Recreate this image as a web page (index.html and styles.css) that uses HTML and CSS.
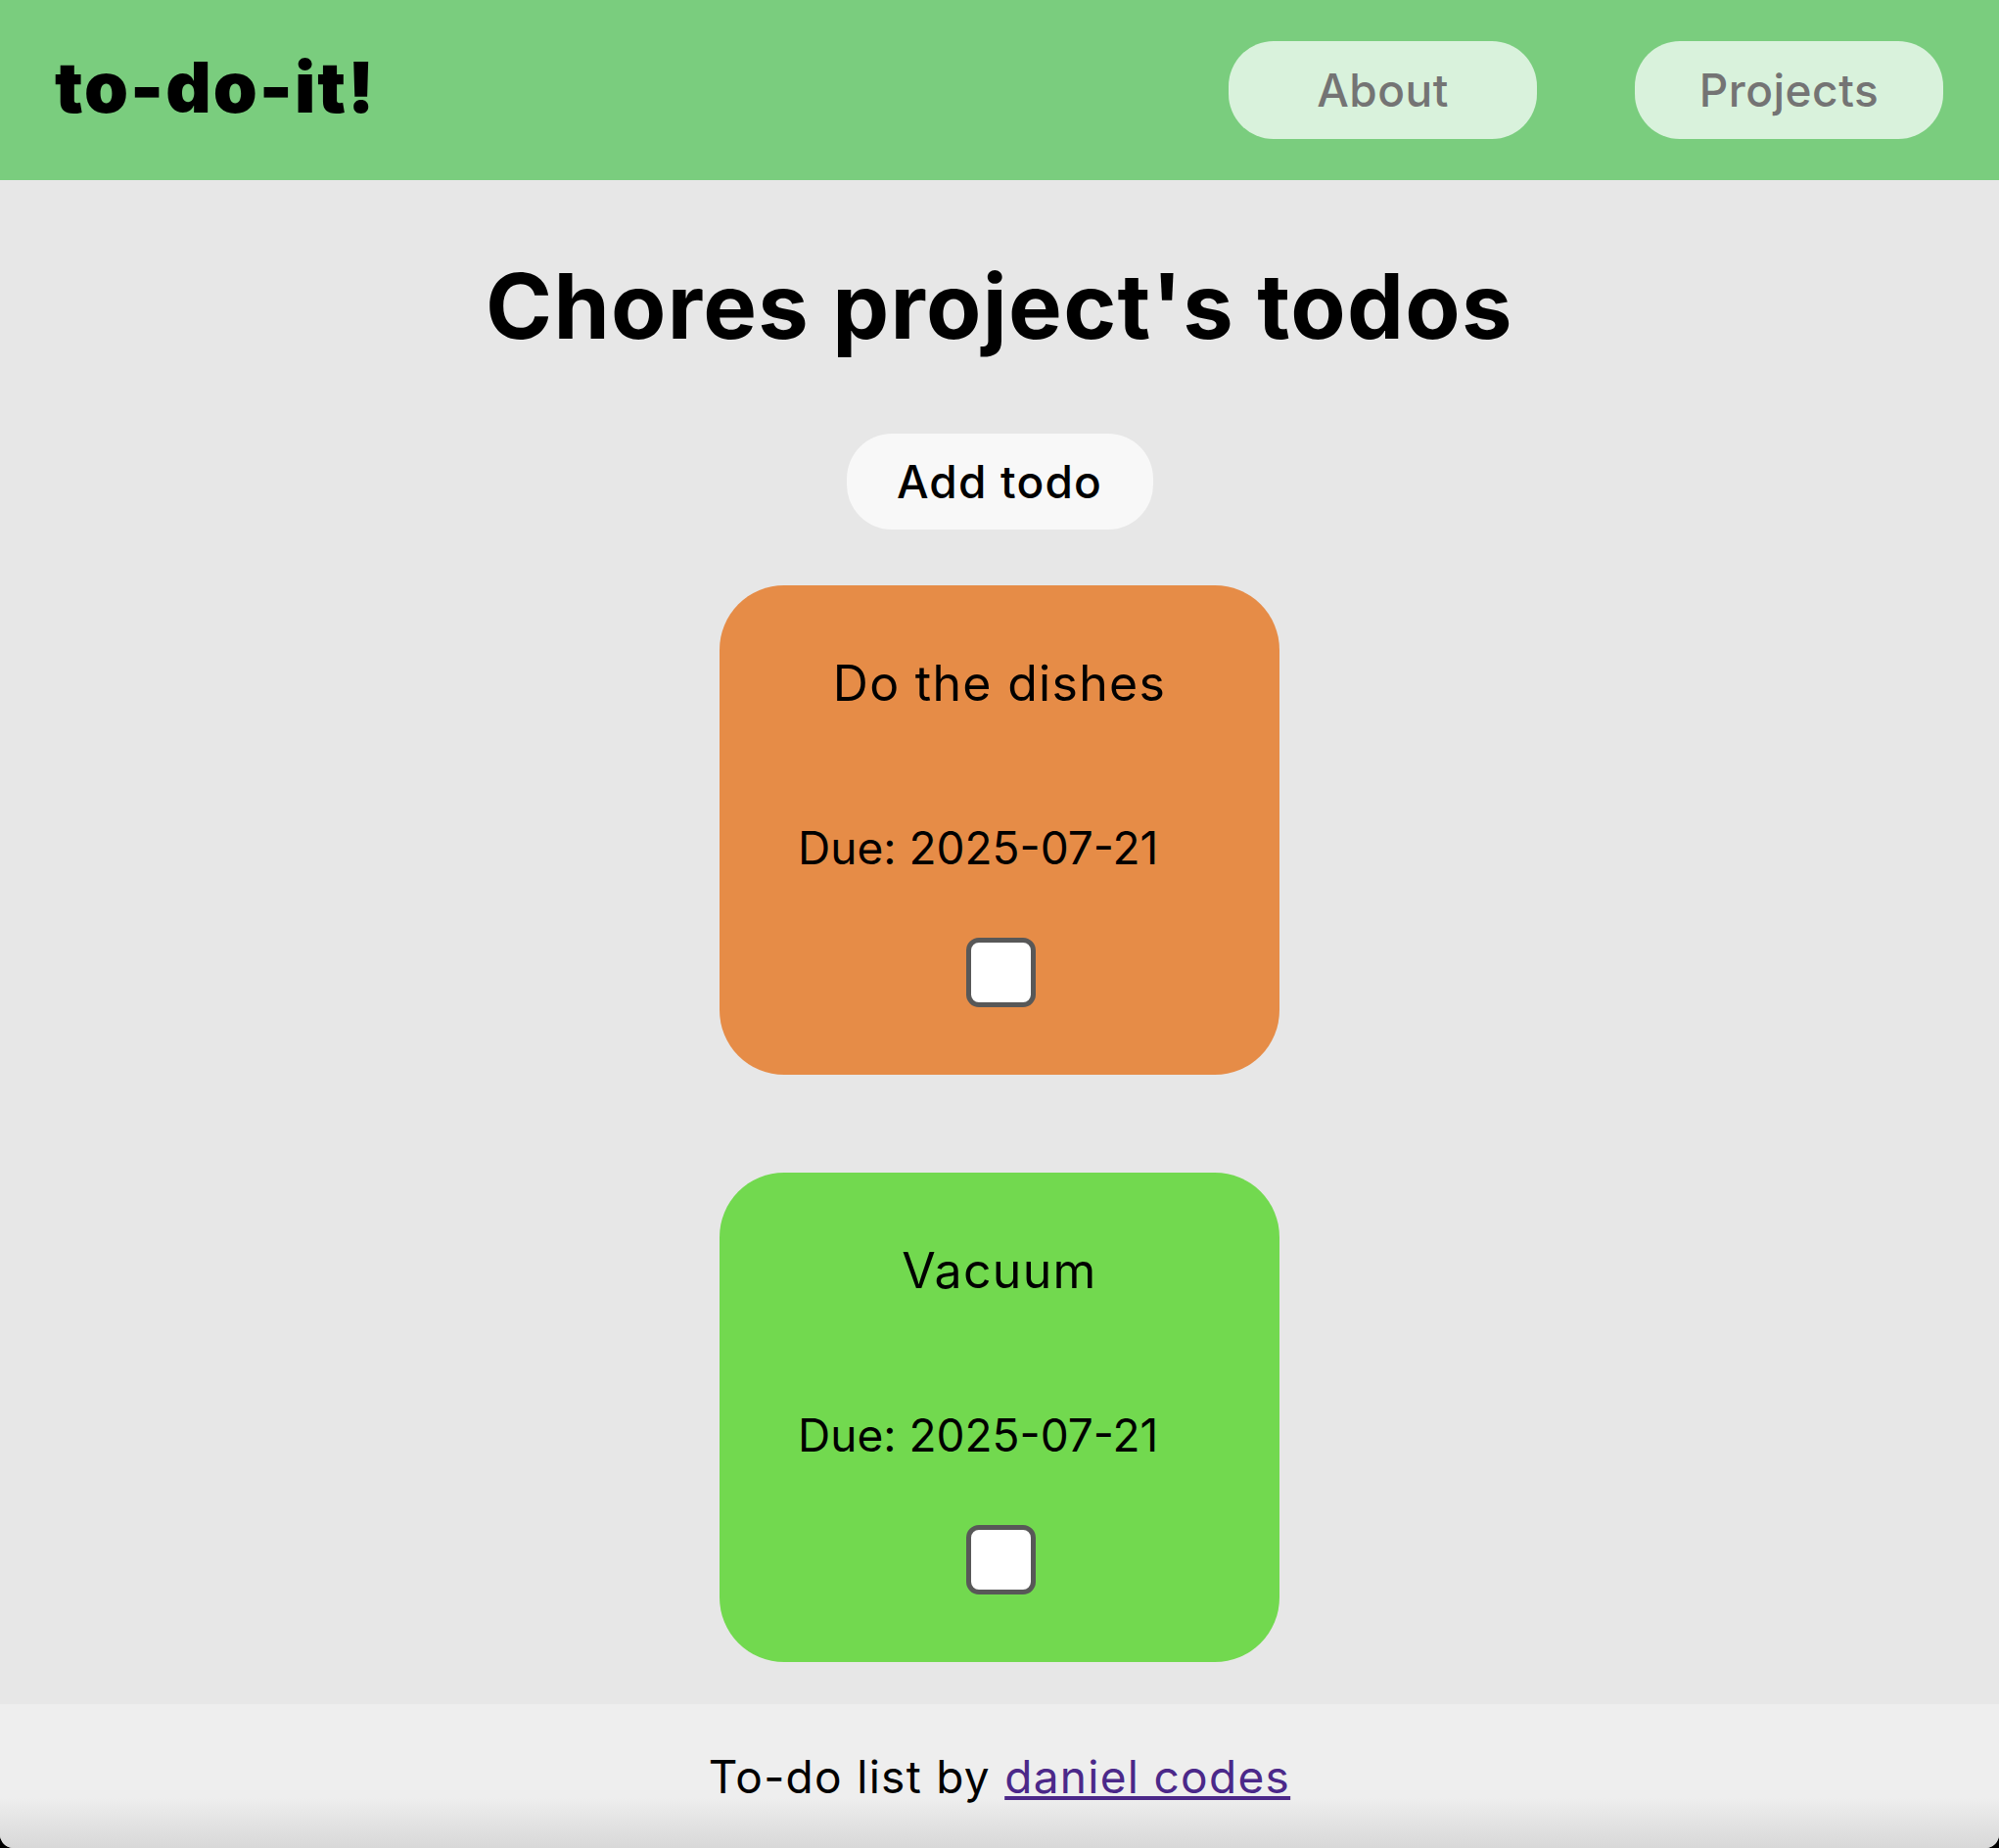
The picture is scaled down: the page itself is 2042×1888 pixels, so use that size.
FILE: index.html
```html
<!DOCTYPE html>
<html lang="en">
<head>
<meta charset="utf-8">
<title>to-do-it!</title>
<link rel="stylesheet" href="styles.css">
</head>
<body>
<div class="page">
  <header class="topbar">
    <div class="logo">to-do-it!</div>
    <nav class="nav">
      <button class="nav-btn">About</button>
      <button class="nav-btn">Projects</button>
    </nav>
  </header>
  <main class="content">
    <h1 class="title">Chores project's todos</h1>
    <button class="add-btn">Add todo</button>
    <div class="todos">
      <div class="todo todo-orange">
        <div class="todo-name">Do the dishes</div>
        <div class="todo-due">Due: 2025-07-21</div>
        <span class="check"></span>
      </div>
      <div class="todo todo-green">
        <div class="todo-name">Vacuum</div>
        <div class="todo-due">Due: 2025-07-21</div>
        <span class="check"></span>
      </div>
    </div>
  </main>
  <footer class="footer">
    <p class="footer-text">To-do list by <a class="footer-link" href="#">daniel codes</a></p>
  </footer>
</div>
</body>
</html>
```
FILE: styles.css
```css
html {
  background: #000;
}
body {
  margin: 0;
  font-family: "Inter", "Noto Sans", sans-serif;
  color: #000;
}
.page {
  min-height: 100vh;
  display: flex;
  flex-direction: column;
  background: #e7e7e7;
  border-bottom-left-radius: 14px;
  border-bottom-right-radius: 14px;
  overflow: hidden;
}
.topbar {
  height: 184px;
  flex-shrink: 0;
  background: #7acd7e;
  display: flex;
  align-items: center;
  justify-content: space-between;
  padding: 0 57px 0 56px;
}
.logo {
  font-size: 72px;
  font-weight: 900;
  letter-spacing: 2px;
  margin-top: -8px;
}
.nav {
  display: flex;
  gap: 100px;
}
.nav-btn {
  width: 315px;
  height: 100px;
  border: none;
  border-radius: 46px;
  background: #d9f2dc;
  color: #747474;
  font-family: inherit;
  font-size: 46px;
  font-weight: 500;
  letter-spacing: 0.5px;
}
.content {
  flex: 1;
  display: flex;
  flex-direction: column;
  align-items: center;
}
.title {
  margin: 73px 0 0;
  font-size: 92px;
  line-height: 112px;
  font-weight: 700;
  letter-spacing: 1.3px;
}
.add-btn {
  margin-top: 74px;
  width: 313px;
  height: 98px;
  border: none;
  border-radius: 46px;
  background: #f8f8f8;
  color: #000;
  font-family: inherit;
  font-size: 46px;
  font-weight: 500;
  letter-spacing: 1.2px;
}
.todos {
  margin-top: 57px;
  display: flex;
  flex-direction: column;
  gap: 100px;
}
.todo {
  width: 572px;
  height: 500px;
  box-sizing: border-box;
  border-radius: 66px;
  padding: 70px 0 0 80px;
  display: flex;
  flex-direction: column;
}
.todo-orange {
  background: #e68c47;
}
.todo-green {
  background: #72d94f;
}
.todo-name {
  margin-left: -80px;
  text-align: center;
  font-size: 50px;
  line-height: 60px;
  letter-spacing: 1.3px;
}
.todo-due {
  margin-top: 110px;
  font-size: 46px;
  line-height: 56px;
}
.check {
  margin: 64px 0 0 172px;
  width: 71px;
  height: 71px;
  box-sizing: border-box;
  border: 5px solid #585858;
  border-radius: 13px;
  background: #fff;
}
.footer {
  height: 147px;
  flex-shrink: 0;
  background: linear-gradient(to bottom, #eeeeee 0%, #eeeeee 65%, #d8d8d8 100%);
  display: flex;
  align-items: center;
  justify-content: center;
}
.footer-text {
  margin: 0;
  font-size: 46px;
  letter-spacing: 1.3px;
}
.footer-link {
  color: #4b2889;
}
```
